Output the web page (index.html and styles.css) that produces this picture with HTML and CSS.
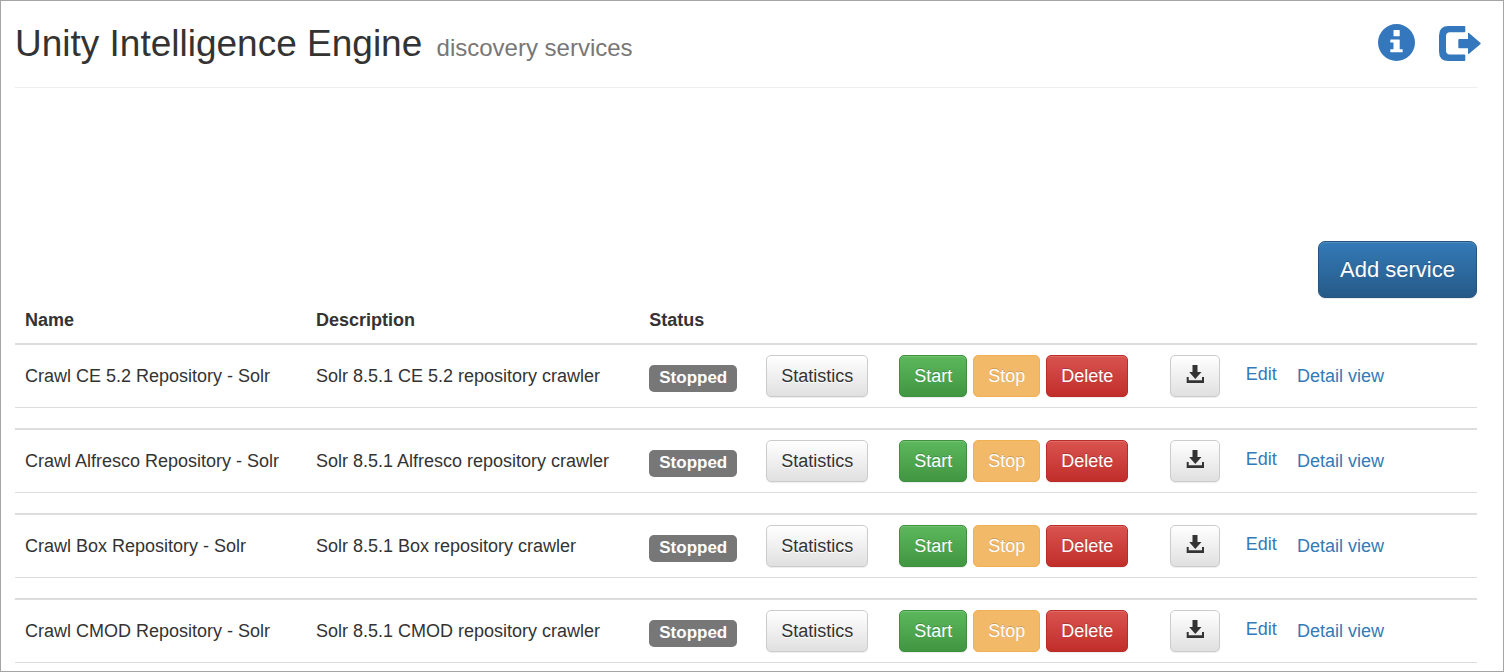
FILE: index.html
```html
<!DOCTYPE html>
<html lang="en">
<head>
<meta charset="utf-8">
<title>Unity Intelligence Engine</title>
<link rel="stylesheet" href="styles.css">
</head>
<body>
<svg class="sprite" aria-hidden="true">
  <symbol id="icon-info" viewBox="0 0 37 37">
    <path fill-rule="evenodd" d="M18.500 0a18.500 18.500 0 1 1 0 37a18.500 18.500 0 0 1 0-37zM16 6q-.5 0-.5.5v5.300q0 .5.5.5h5.200q.5 0 .5-.5V6.500q0-.5-.5-.5zM12.800 15.500q-.5 0-.5.500v2.100q0 .5.5.5h2.700v6.700h-2.700q-.5 0-.5.5v1.900q0 .5.5.5h11.400q.5 0 .5-.5v-1.900q0-.5-.5-.5h-2.500V16q0-.5-.5-.5z"/>
  </symbol>
  <symbol id="icon-logout" viewBox="0 0 42 35">
    <path d="M9.500 0H25.300q1 0 1 1V5.300q0 1-1 1H11q-4 0-4 4V24.500q0 4 4 4H25.300q1 0 1 1V34q0 1-1 1H9.500Q0 35 0 25.500V9.500Q0 0 9.500 0zM20.300 13H29V7.600q0-1.200 1-.5L41.300 16.800q.8.700 0 1.400L30 27.800q-1 .7-1-.5V22.200H20.300q-1 0-1-1V14q0-1 1-1z"/>
  </symbol>
  <symbol id="icon-download" viewBox="-1 0 20 18">
    <path d="M6.500 0h5v7h4L9.300 14 3.200 7h3.300zM.7 12h2v3.300h13.300V12h2v6H.7z"/>
  </symbol>
</svg>

<div class="page">
  <header class="page-header">
    <h1 class="title">Unity Intelligence Engine <small class="subtitle">discovery services</small></h1>
    <nav class="header-links" aria-label="Application">
      <a href="#about" aria-label="About"><svg class="icon-info"><use href="#icon-info"/></svg></a>
      <a href="#logout" aria-label="Log out"><svg class="icon-logout"><use href="#icon-logout"/></svg></a>
    </nav>
  </header>

  <main>
    <div class="toolbar">
      <button type="button" class="btn btn-primary">Add service</button>
    </div>

    <table class="services">
      <colgroup>
        <col class="col-name"><col class="col-description"><col class="col-status"><col class="col-statistics">
        <col class="col-actions"><col class="col-download"><col class="col-edit"><col>
      </colgroup>
      <thead>
        <tr><th scope="col">Name</th><th scope="col">Description</th><th scope="col">Status</th><td colspan="5"></td></tr>
      </thead>
      <tbody>
        <tr class="service">
          <td>Crawl CE 5.2 Repository - Solr</td>
          <td>Solr 8.5.1 CE 5.2 repository crawler</td>
          <td class="status"><span class="badge">Stopped</span></td>
          <td><button type="button" class="btn btn-default">Statistics</button></td>
          <td><div class="actions"><button type="button" class="btn btn-success">Start</button><button type="button" class="btn btn-warning" disabled>Stop</button><button type="button" class="btn btn-danger">Delete</button></div></td>
          <td><button type="button" class="btn btn-default" aria-label="Download"><svg class="icon-download"><use href="#icon-download"/></svg></button></td>
          <td class="edit"><a href="#edit">Edit</a></td>
          <td><a href="#detail">Detail view</a></td>
        </tr>
        <tr class="spacer"><td colspan="8"></td></tr>
        <tr class="service">
          <td>Crawl Alfresco Repository - Solr</td>
          <td>Solr 8.5.1 Alfresco repository crawler</td>
          <td class="status"><span class="badge">Stopped</span></td>
          <td><button type="button" class="btn btn-default">Statistics</button></td>
          <td><div class="actions"><button type="button" class="btn btn-success">Start</button><button type="button" class="btn btn-warning" disabled>Stop</button><button type="button" class="btn btn-danger">Delete</button></div></td>
          <td><button type="button" class="btn btn-default" aria-label="Download"><svg class="icon-download"><use href="#icon-download"/></svg></button></td>
          <td class="edit"><a href="#edit">Edit</a></td>
          <td><a href="#detail">Detail view</a></td>
        </tr>
        <tr class="spacer"><td colspan="8"></td></tr>
        <tr class="service">
          <td>Crawl Box Repository - Solr</td>
          <td>Solr 8.5.1 Box repository crawler</td>
          <td class="status"><span class="badge">Stopped</span></td>
          <td><button type="button" class="btn btn-default">Statistics</button></td>
          <td><div class="actions"><button type="button" class="btn btn-success">Start</button><button type="button" class="btn btn-warning" disabled>Stop</button><button type="button" class="btn btn-danger">Delete</button></div></td>
          <td><button type="button" class="btn btn-default" aria-label="Download"><svg class="icon-download"><use href="#icon-download"/></svg></button></td>
          <td class="edit"><a href="#edit">Edit</a></td>
          <td><a href="#detail">Detail view</a></td>
        </tr>
        <tr class="spacer"><td colspan="8"></td></tr>
        <tr class="service">
          <td>Crawl CMOD Repository - Solr</td>
          <td>Solr 8.5.1 CMOD repository crawler</td>
          <td class="status"><span class="badge">Stopped</span></td>
          <td><button type="button" class="btn btn-default">Statistics</button></td>
          <td><div class="actions"><button type="button" class="btn btn-success">Start</button><button type="button" class="btn btn-warning" disabled>Stop</button><button type="button" class="btn btn-danger">Delete</button></div></td>
          <td><button type="button" class="btn btn-default" aria-label="Download"><svg class="icon-download"><use href="#icon-download"/></svg></button></td>
          <td class="edit"><a href="#edit">Edit</a></td>
          <td><a href="#detail">Detail view</a></td>
        </tr>
      </tbody>
    </table>
  </main>
</div>
</body>
</html>
```
FILE: styles.css
```css
* {
  box-sizing: border-box;
}

body {
  margin: 0;
  background: #fff;
  color: #333;
  font-family: "Liberation Sans", Arial, sans-serif;
  font-size: 18px;
  line-height: 24px;
}

a {
  color: #337ab7;
  text-decoration: none;
}

svg {
  display: block;
  fill: currentColor;
}

.sprite {
  display: none;
}

.page {
  min-height: 100vh;
  padding: 0 26px 8px 14px;
  border: 1px solid #a5a5a5;
}

.page-header {
  display: flex;
  justify-content: space-between;
  align-items: flex-start;
  padding: 22px 0;
  border-bottom: 1px solid #eee;
}

.title {
  margin: 0;
  font-size: 37px;
  font-weight: 400;
  line-height: 42px;
}

.subtitle {
  margin-left: 4px;
  color: #777;
  font-size: 24px;
  line-height: 24px;
}

.header-links {
  display: flex;
  align-items: flex-end;
  gap: 24px;
  margin-right: -4px;
  padding-top: 1px;
}

.header-links a {
  color: #3577bc;
}

.icon-info {
  width: 37px;
  height: 37px;
}

.icon-logout {
  width: 42px;
  height: 35px;
}

.toolbar {
  display: flex;
  justify-content: flex-end;
  padding-top: 153px;
}

.btn {
  display: block;
  padding: 8px 14px;
  border: 1px solid transparent;
  border-radius: 5px;
  color: #fff;
  font: inherit;
  text-shadow: 0 -1px 0 rgba(0, 0, 0, 0.2);
  box-shadow: inset 0 1px 0 rgba(255, 255, 255, 0.15), 0 1px 1px rgba(0, 0, 0, 0.075);
}

.btn-default {
  border-color: #ccc;
  background: linear-gradient(#fff, #e0e0e0);
  color: #333;
  text-shadow: 0 1px 0 #fff;
}

.btn-default svg {
  margin: 1px 0 5px;
}

.btn-primary {
  padding: 14px 21px;
  border-color: #245580;
  border-radius: 7px;
  background: linear-gradient(#337ab7, #265a88);
  font-size: 22px;
  line-height: 27px;
}

.btn-success {
  border-color: #3e8f3e;
  background: linear-gradient(#5cb85c, #419641);
}

.btn-warning {
  border-color: #eea236;
  background: #f0ad4e;
  opacity: 0.85;
  box-shadow: none;
}

.btn-danger {
  border-color: #b92c28;
  background: linear-gradient(#d9534f, #c12e2a);
}

.actions {
  display: flex;
  gap: 6px;
}

.services {
  width: 100%;
  border-spacing: 0;
  table-layout: fixed;
}

.services th,
.services td {
  padding: 10px 0 10px 10px;
  text-align: left;
  vertical-align: middle;
}

.services thead th,
.services thead td {
  border-bottom: 2px solid #ddd;
  line-height: 25px;
}

.service td {
  border-bottom: 1px solid #ddd;
}

.services .spacer td {
  height: 22px;
  padding: 0;
  border-bottom: 2px solid #ddd;
}

.services .status {
  padding-top: 14px;
}

.services .edit {
  padding-bottom: 14px;
}

.badge {
  display: inline-block;
  padding: 0 10px 1px;
  border-radius: 5px;
  background: #777;
  color: #fff;
  font-size: 17px;
  font-weight: 700;
  line-height: 26px;
  vertical-align: middle;
}

.icon-download {
  width: 20px;
  height: 18px;
}

.col-name { width: 19.9%; }
.col-description { width: 22.8%; }
.col-status { width: 8%; }
.col-statistics { width: 9.1%; }
.col-actions { width: 18.5%; }
.col-download { width: 5.2%; }
.col-edit { width: 3.5%; }
```
